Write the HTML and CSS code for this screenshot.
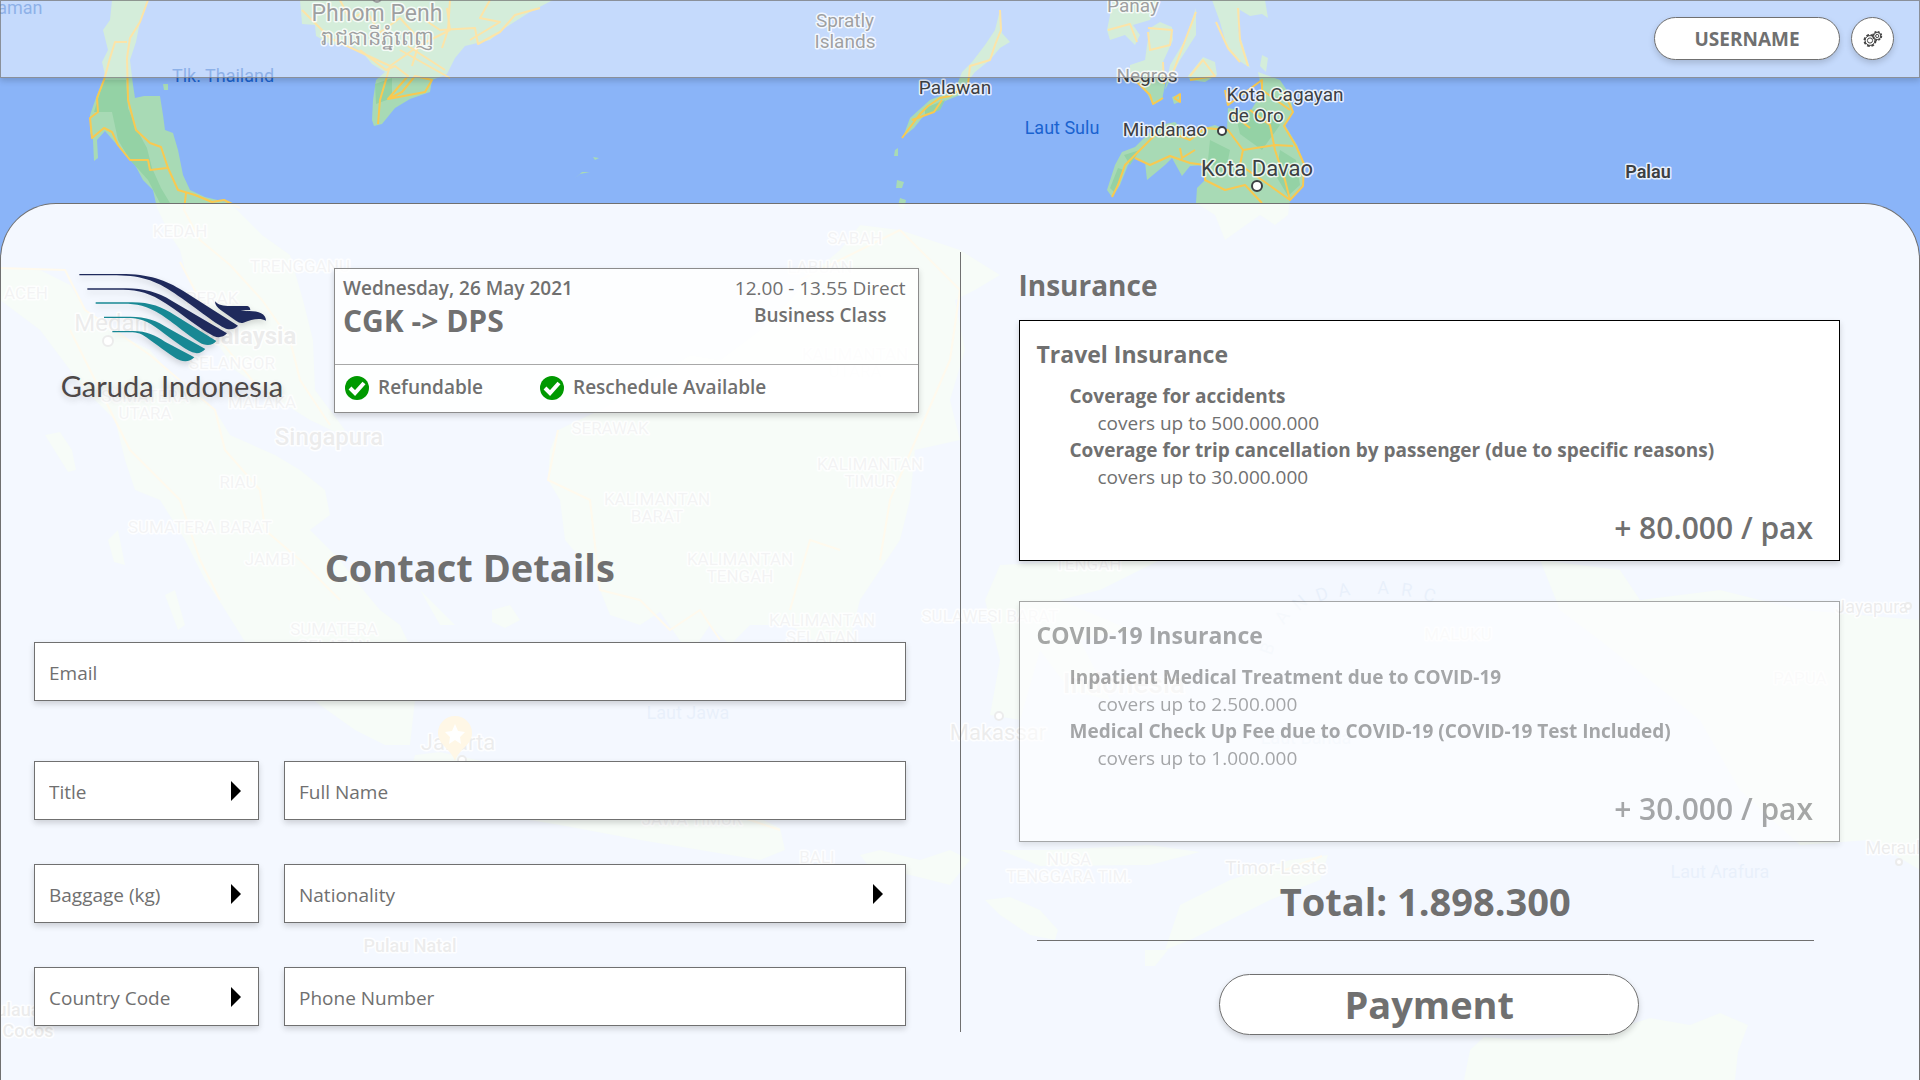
FILE: index.html
```html
<!DOCTYPE html>
<html lang="en">
<head>
<meta charset="utf-8">
<meta name="viewport" content="width=device-width, initial-scale=1">
<title>Flight booking – contact details</title>
<link rel="stylesheet" href="styles.css">
</head>
<body>
<svg class="map" viewBox="0 0 1920 1080" preserveAspectRatio="xMidYMin slice" aria-hidden="true">
  <g class="land">
    <path d="M112 0H147L140 22 136 42 130 60 133 85 135 98 144 96 160 96 163 115 165 130 173 133 178 150 183 175 190 190 205 197 230 203 262 235 290 255 303 300 313 340 315 390 345 430 335 432 310 420 270 395 235 370 215 340 200 300 185 270 180 250 170 235 157 208 153 190 143 180 135 165 125 155 118 146 105 131 97 140 98 158 94 161 93 140 90 132 90 115 97 95 105 75 102 62 108 50 103 30 110 20Z"/>
    <path d="M300 0 302 24 315 25 316 36 330 44 352 46 362 52 372 64 385 72 376 80 373 100 372 120 374 126 382 124 395 108 410 99 430 92 432 80 447 74 455 58 465 46 490 40 505 28 530 12 553 0Z"/>
    <path d="M1000 10 1002 33 1010 42 1000 48 990 60 975 72 965 85 960 95 940 103 922 118 914 128 903 137 910 118 930 100 955 90 962 72 972 62 985 45 995 30Z"/>
    <path d="M1113 0 1107 30 1110 40 1125 35 1135 45 1140 35 1133 25 1150 20 1158 0Z"/>
    <path d="M1150 28 1160 22 1172 27 1173 40 1163 62 1165 85 1162 100 1153 105 1147 93 1130 75 1130 65 1145 60 1147 45Z"/>
    <path d="M1196 8 1196 35 1180 60 1165 90 1170 65 1185 40Z"/>
    <path d="M1188 76 1203 57 1215 62 1217 75 1205 82 1190 80Z"/>
    <path d="M1212 0 1220 22 1228 50 1238 60 1250 68 1243 45 1238 30 1240 10 1250 16 1262 14 1268 18 1265 0Z"/>
    <path d="M1112 197 1107 190 1115 165 1122 152 1135 147 1145 137 1156 126 1175 122 1188 135 1205 128 1215 125 1227 130 1228 108 1250 112 1262 92 1258 72 1280 80 1290 95 1293 110 1285 125 1297 145 1305 165 1302 185 1290 200 1288 215 1275 225 1260 215 1225 240 1215 215 1196 203 1197 188 1205 180 1205 165 1190 166 1182 176 1172 158 1165 165 1147 180 1145 162 1135 158 1128 165 1120 185Z"/>
    <path d="M897 180 904 182 902 188 896 188ZM900 198 906 200 904 210 898 206ZM895 150 898 148 898 156 894 156ZM593 157 599 158 595 160ZM574 179 582 172 590 172 580 174ZM163 84 168 84 168 90 164 90ZM1262 55 1268 58 1266 72 1260 66ZM1172 97 1180 94 1180 102 1174 104Z"/>
    <path d="M0 268 40 270 70 285 85 310 110 330 150 350 180 385 215 410 230 435 275 455 300 470 325 490 330 515 310 530 340 560 355 580 380 610 400 625 412 650 415 700 410 745 385 745 355 730 320 705 250 650 222 605 205 580 185 540 160 500 135 490 125 460 115 420 85 390 40 330 0 300Z"/>
    <path d="M45 435 60 432 72 450 76 470 68 472ZM108 540 118 530 125 565 114 562ZM165 595 175 590 185 625 178 630ZM492 610 510 605 520 620 505 628 492 622ZM420 590 440 610 455 625 440 625Z"/>
    <path d="M558 430 550 450 548 480 560 500 565 540 590 570 600 590 610 615 640 625 660 612 690 655 710 625 730 645 750 625 790 625 820 645 850 640 860 600 880 570 900 540 910 500 915 450 960 440 950 400 965 350 955 300 975 290 1000 275 960 250 900 230 860 225 840 250 810 275 790 300 760 330 720 360 690 355 650 380 600 410Z"/>
    <path d="M415 755 440 752 500 765 540 780 600 790 660 795 720 800 780 828 785 850 760 860 700 850 640 840 560 825 500 815 440 810 405 790Z"/>
    <path d="M860 855 880 850 920 860 950 850 970 860 950 885 910 875 870 868ZM985 900 1010 897 1040 910 1058 930 1055 940 1030 935 1000 915ZM1000 850 1050 850 1150 845 1200 852 1150 865 1040 866Z"/>
    <path d="M985 600 1000 565 1100 560 1180 550 1100 590 1060 600 1130 630 1080 640 1110 700 1070 690 1040 650 1020 720 990 715 1000 660Z"/>
    <path d="M1540 560 1620 570 1640 600 1720 590 1800 610 1920 620V870L1870 840 1800 845 1740 790 1700 720 1650 680 1600 640 1560 610Z"/>
    <path d="M1180 905 1230 880 1290 860 1328 855 1320 880 1270 900 1230 920 1190 940 1165 950ZM1145 950 1168 950 1155 966 1145 966Z"/>
    <path d="M1464 1080 1470 1050 1484 1037 1525 1040 1600 1034 1650 1018 1690 1025 1720 1013 1748 1025 1738 1052 1735 1080Z"/>
  </g>
  <g class="forest">
    <path d="M104 80 126 80 128 108 136 128 147 148 152 168 161 188 170 203H160L148 180 130 160 118 140 112 112 94 112ZM375 84 392 78 392 98 376 104ZM1235 112 1265 108 1280 125 1262 150 1240 134ZM1210 140 1230 150 1225 175 1208 160ZM1124 155 1140 150 1130 165ZM925 108 945 100 940 110 925 116ZM1280 150 1296 160 1300 185 1288 196 1276 176ZM1118 168 1124 170 1114 192 1110 188Z"/>
  </g>
  <g class="roads">
    <path d="M148 0 140 22 130 38 127 58 128 100 136 130 150 143 161 147 168 168 178 190 195 195 212 202 224 200 240 208M127 42H115L110 58 104 80 97 98 98 112 90 118 92 138 104 128 112 132 118 145 130 160 148 160 150 170 167 168M186 193 184 210 200 240 230 265 262 300 290 340 300 380 330 425M180 262 200 300 220 340 260 390"/>
    <path d="M390 66 380 100 378 124M388 99 425 92 432 80 415 76 402 92 388 99 408 76 395 66 386 70 360 50M302 10 330 38 390 66 420 45 450 30 447 8M400 50 450 78M408 46 445 70M425 20 440 30 475 28 478 44 500 32 515 15 540 8M450 0 448 30 442 48M490 0 480 18 500 22 470 40M378 34 400 18 420 40 412 66M340 0 350 20 366 10 378 30"/>
    <path d="M1000 10 1001 30 995 45 990 60 970 66 968 85 950 96 940 98 928 106 920 114 902 138M912 120 934 112 942 100"/>
    <path d="M1108 30 1130 24 1137 42M1148 28 1172 30 1170 45 1150 50 1148 32M1163 62 1164 84M1130 75 1150 95 1153 104 1163 98M1170 80 1196 12M1190 76 1203 60 1215 76 1190 80M1216 22 1228 48 1240 62M1238 8 1240 40 1248 66M1225 90 1228 105 1262 80 1262 98M1174 98 1180 94 1180 102 1174 98"/>
    <path d="M1112 197 1118 185 1125 165 1140 150 1155 135 1175 134 1190 140 1205 128 1228 130 1243 150 1240 165 1262 180 1290 200M1135 158 1150 165 1170 156 1190 163 1205 165 1205 180 1225 190 1245 185 1262 203M1243 150 1275 145 1293 146M1250 110 1270 125 1275 150 1285 180 1290 200 1303 186 1304 164 1296 146 1284 126 1293 112 1284 92M1230 112 1250 128M1180 148 1182 158 1195 150M1262 90 1290 110"/>
    <path d="M0 268 65 270 85 310 150 355 215 410 225 450 260 490 265 530 300 560 340 600M70 330 115 420 130 450 180 500 200 560 220 600M558 430 548 480 590 500 600 590 640 600 670 630 700 610 720 640M900 230 960 290 950 360 890 500 880 560M790 610 810 540 840 550M415 765 500 785 600 800 720 810 780 830M900 230 800 280"/>
    <path d="M1285 870 1322 856"/>
  </g>
  <g class="labels">
    <text x="377" y="21" font-size="23">Phnom Penh</text>
    <text x="377" y="45" font-size="21">រាជធានីភ្នំពេញ</text>
    <text x="845" y="27" font-size="19">Spratly</text>
    <text x="845" y="48" font-size="19">Islands</text>
    <text x="955" y="94" font-size="19">Palawan</text>
    <text x="1133" y="12" font-size="19">Panay</text>
    <text x="1147" y="82" font-size="19">Negros</text>
    <text x="1165" y="136" font-size="19">Mindanao</text>
    <text x="1285" y="101" font-size="19">Kota Cagayan</text>
    <text x="1256" y="122" font-size="19">de Oro</text>
    <text x="1257" y="176" font-size="22">Kota Davao</text>
    <text x="1648" y="178" font-size="18" font-weight="600">Palau</text>
    <text x="111" y="331" font-size="24">Medan</text>
    <text x="248" y="344" font-size="24" font-weight="700">Malaysia</text>
    <text x="329" y="445" font-size="24" font-weight="500">Singapura</text>
    <text x="458" y="750" font-size="22">Jakarta</text>
    <text x="1124" y="693" font-size="28" font-weight="500">Indonesia</text>
    <text x="998" y="740" font-size="22">Makassar</text>
    <text x="410" y="952" font-size="18" font-weight="500">Pulau Natal</text>
    <text x="8" y="1016" font-size="18" font-weight="500">Kepulauan</text>
    <text x="28" y="1037" font-size="18" font-weight="500">Cocos</text>
    <text x="1276" y="874" font-size="19">Timor-Leste</text>
    <text x="1872" y="613" font-size="18">Jayapura</text>
    <text x="1900" y="854" font-size="18">Merauke</text>
  </g>
  <g class="labels region">
    <text x="180" y="237">KEDAH</text><text x="300" y="272">TRENGGANU</text><text x="26" y="299">ACEH</text>
    <text x="212" y="304">PERAK</text><text x="232" y="369">SELANGOR</text><text x="145" y="402">SUMATERA</text>
    <text x="145" y="419">UTARA</text><text x="262" y="408">MALAKA</text><text x="238" y="488">RIAU</text>
    <text x="200" y="533">SUMATERA BARAT</text><text x="270" y="565">JAMBI</text><text x="334" y="635">SUMATERA</text>
    <text x="334" y="652">SELATAN</text><text x="820" y="273">LABUAN</text><text x="855" y="244">SABAH</text>
    <text x="610" y="434">SERAWAK</text><text x="870" y="470">KALIMANTAN</text><text x="870" y="487">TIMUR</text>
    <text x="855" y="360">KALIMANTAN</text><text x="855" y="377">UTARA</text><text x="657" y="505">KALIMANTAN</text>
    <text x="657" y="522">BARAT</text><text x="740" y="565">KALIMANTAN</text><text x="740" y="582">TENGAH</text>
    <text x="822" y="626">KALIMANTAN</text><text x="822" y="643">SELATAN</text><text x="990" y="622">SULAWESI BARAT</text>
    <text x="1088" y="570">TENGAH</text><text x="692" y="825">JAWA TIMUR</text><text x="817" y="863">BALI</text>
    <text x="1458" y="640">MALUKU</text><text x="1800" y="684">PAPUA</text><text x="1069" y="865">NUSA</text>
    <text x="1069" y="882">TENGGARA TIM.</text>
  </g>
  <g class="labels sea">
    <text x="4" y="14">Andaman</text><text x="223" y="82">Tlk. Thailand</text><text x="1062" y="134">Laut Sulu</text>
    <text x="688" y="719">Laut Jawa</text><text x="1306" y="744">Laut Banda</text><text x="1720" y="878">Laut Arafura</text>
    <text x="1270" y="646" transform="rotate(-70 1275 646)">B</text><text x="1288" y="622" transform="rotate(-55 1286 622)">A</text>
    <text x="1304" y="608" transform="rotate(-40 1303 608)">N</text><text x="1324" y="600" transform="rotate(-20 1324 600)">D</text>
    <text x="1345" y="596" transform="rotate(-10 1345 596)">A</text><text x="1383" y="594">A</text>
    <text x="1406" y="596" transform="rotate(8 1406 596)">R</text><text x="1428" y="601" transform="rotate(16 1428 601)">C</text>
  </g>
  <g class="town"><circle cx="1222" cy="131" r="4"/><circle cx="1257" cy="186" r="5"/><circle cx="108" cy="341" r="5"/><circle cx="999" cy="716" r="4"/><circle cx="1908" cy="606" r="3"/><circle cx="1899" cy="862" r="3"/><circle cx="462" cy="760" r="4"/><circle cx="377" cy="-2" r="4"/></g>
  <path fill="#f9ab00" d="M455 716a17 17 0 0 1 17 17c0 12-13 16-17 28-4-12-17-16-17-28a17 17 0 0 1 17-17Z"/>
  <path fill="#fff" d="m455 724 3 7 7 1-5 5 1 7-6-4-6 4 1-7-5-5 7-1Z"/>
</svg>

<div class="page">
  <header class="topbar">
    <button class="pill user" type="button">USERNAME</button>
    <button class="pill gear" type="button" aria-label="Settings">
      <svg width="20" height="18" viewBox="0 0 20 18" fill="none" stroke="#444">
        <circle cx="7" cy="10.500" r="5.600" stroke-width="1.800" stroke-dasharray="2.700 1.700"/>
        <circle cx="7" cy="10.500" r="4.900"/>
        <circle cx="7" cy="10.500" r="2.600"/>
        <circle cx="14.200" cy="6" r="4.200" stroke-width="1.600" stroke-dasharray="2 1.300" fill="#fff"/>
        <circle cx="14.200" cy="6" r="3.600"/>
        <circle cx="14.200" cy="6" r="1.600"/>
      </svg>
    </button>
  </header>

  <main class="panel">
    <section class="left">
      <div class="trip">
        <div class="logo">
          <svg viewBox="0 0 750 315" role="img" aria-label="Garuda Indonesia emblem">
            <g fill="#1f2a5c">
              <path d="M88 42H200C290 40 345 58 400 93L564 197Q550 212 528 206C500 195 440 145 385 108 325 65 280 47 200 46H88Z"/>
              <path d="M112 85H220C280 84 320 95 365 122L531 220Q515 237 492 229C455 210 400 165 350 132 300 98 265 90 220 89H112Z"/>
              <path d="M495 124C505 136 520 138 540 138H592Q600 140 601 150L572 151 602 155 588 153C620 151 648 158 648 182 630 172 605 178 580 188Q570 191 558 182L512 150Q495 138 495 124Z"/>
            </g>
            <g fill="#188894">
              <path d="M137 127H240C300 126 335 140 375 166L499 243Q485 260 460 253C430 240 380 195 335 165 290 136 260 131 220 131H137Z"/>
              <path d="M162 170H240C290 170 320 182 355 205L466 267Q450 285 427 277C400 265 350 225 315 200 280 177 260 174 230 174H162Z"/>
              <path d="M187 213H250C290 214 315 225 345 245L433 292Q415 310 390 301C365 290 330 260 300 240 275 220 262 217 240 217H187Z"/>
            </g>
          </svg>
          <span class="wordmark">Garuda Indonesıa</span>
        </div>
        <article class="flight">
          <div class="flight-main">
            <div>
              <p class="semi">Wednesday, 26 May 2021</p>
              <h2>CGK -&gt; DPS</h2>
            </div>
            <div class="times">
              <p>12.00 - 13.55 Direct</p>
              <p class="semi">Business Class</p>
            </div>
          </div>
          <ul class="perks">
            <li><svg width="24" height="24" viewBox="0 0 24 24"><circle cx="12" cy="12" r="12" fill="#090"/><path d="m5 12 5 5 9-10" fill="none" stroke="#fff" stroke-width="4"/></svg>Refundable</li>
            <li><svg width="24" height="24" viewBox="0 0 24 24"><circle cx="12" cy="12" r="12" fill="#090"/><path d="m5 12 5 5 9-10" fill="none" stroke="#fff" stroke-width="4"/></svg>Reschedule Available</li>
          </ul>
        </article>
      </div>

      <form class="contact">
        <h1>Contact Details</h1>
        <input class="field wide" type="email" placeholder="Email" aria-label="Email">
        <div class="choice"><select class="field" aria-label="Title"><option>Title</option></select><svg width="10" height="20" viewBox="0 0 10 20"><path d="M0 0 10 10 0 20Z"/></svg></div>
        <input class="field" type="text" placeholder="Full Name" aria-label="Full Name">
        <div class="choice"><select class="field" aria-label="Baggage (kg)"><option>Baggage (kg)</option></select><svg width="10" height="20" viewBox="0 0 10 20"><path d="M0 0 10 10 0 20Z"/></svg></div>
        <div class="choice long"><select class="field" aria-label="Nationality"><option>Nationality</option></select><svg width="10" height="20" viewBox="0 0 10 20"><path d="M0 0 10 10 0 20Z"/></svg></div>
        <div class="choice"><select class="field" aria-label="Country Code"><option>Country Code</option></select><svg width="10" height="20" viewBox="0 0 10 20"><path d="M0 0 10 10 0 20Z"/></svg></div>
        <input class="field" type="tel" placeholder="Phone Number" aria-label="Phone Number">
      </form>
    </section>

    <div class="divider"></div>

    <section class="right">
      <h2 class="heading">Insurance</h2>
      <article class="cover chosen">
        <h3>Travel Insurance</h3>
        <dl>
          <dt>Coverage for accidents</dt><dd>covers up to 500.000.000</dd>
          <dt>Coverage for trip cancellation by passenger (due to specific reasons)</dt><dd>covers up to 30.000.000</dd>
        </dl>
        <p class="price">+ 80.000 / pax</p>
      </article>
      <article class="cover">
        <h3>COVID-19 Insurance</h3>
        <dl>
          <dt>Inpatient Medical Treatment due to COVID-19</dt><dd>covers up to 2.500.000</dd>
          <dt>Medical Check Up Fee due to COVID-19 (COVID-19 Test Included)</dt><dd>covers up to 1.000.000</dd>
        </dl>
        <p class="price">+ 30.000 / pax</p>
      </article>
      <p class="total">Total: 1.898.300</p>
      <button class="pill pay" type="button">Payment</button>
    </section>
  </main>
</div>
</body>
</html>
```
FILE: styles.css
```css
* { box-sizing: border-box; }
body, h1, h2, h3, p, ul, dl, dd { margin: 0; padding: 0; }
body {
  background: #8ab4f8;
  color: #707070;
  font: 400 19px/27px "Open Sans", "Noto Sans", sans-serif;
}
button, input, select { font: inherit; color: inherit; }

/* Background map */
.map { position: absolute; inset: 0; width: 100%; height: 100%; z-index: -1; }
.land { fill: #a8dab5; }
.forest { fill: #94d2a5; }
.roads { fill: none; stroke: #f8c951; stroke-width: 2; stroke-linejoin: round; }
.labels {
  font-family: Roboto, sans-serif;
  text-anchor: middle;
  fill: #3c4043;
  stroke: #fff;
  stroke-opacity: .8;
  stroke-width: 3;
  stroke-linejoin: round;
  paint-order: stroke;
}
.region { font-size: 17px; fill: #80868b; }
.sea { font-size: 18px; fill: #1a63d0; stroke: none; }
.town { fill: #fff; stroke: #3c4043; stroke-width: 2; }

.page { min-height: 100vh; display: flex; flex-direction: column; }

.topbar {
  height: 78px;
  display: flex;
  justify-content: flex-end;
  gap: 11px;
  padding: 16px 25px 0;
  background: rgba(255, 255, 255, .5);
  border: 1px solid rgba(112, 112, 112, .7);
  box-shadow: 0 3px 6px rgba(0, 0, 0, .16);
}
.pill {
  display: flex;
  align-items: center;
  justify-content: center;
  padding: 0;
  background: #fff;
  border: 1px solid #707070;
  border-radius: 31px;
  box-shadow: 0 3px 6px rgba(0, 0, 0, .16);
  font-weight: 700;
}
.user { width: 186px; height: 43px; padding-top: 2px; }
.gear { width: 43px; height: 43px; }

.panel {
  flex: 1;
  display: grid;
  grid-template-columns: 1fr 1px 1fr;
  margin-top: 125px;
  background: rgba(255, 255, 255, .9);
  border: 1px solid #707070;
  border-bottom: 0;
  border-radius: 56px 56px 0 0;
}
.divider { margin: 48px 0; background: #707070; }

.left { padding: 64px 41px 48px 33px; }
.trip { display: flex; gap: 51px; padding-left: 27px; }
.logo { width: 222px; display: flex; flex-direction: column; align-items: center; }
.logo svg { width: 250px; margin: -8px -17px 0 -11px; filter: drop-shadow(0 3px 3px rgba(0, 0, 0, .16)); }
.wordmark {
  margin-top: 3px;
  color: #4d4848;
  font: 400 29px/36px Lato, sans-serif;
  text-shadow: 0 3px 6px rgba(0, 0, 0, .16);
  white-space: nowrap;
}
.flight {
  flex: 1;
  background: rgba(255, 255, 255, .8);
  border: 1px solid #8c8c8c;
  box-shadow: 0 3px 6px rgba(0, 0, 0, .16);
}
.flight-main {
  display: flex;
  justify-content: space-between;
  min-height: 95px;
  padding: 6px 12px 0 8px;
}
.semi { font-weight: 600; }
.flight h2 { font-size: 30px; line-height: 38px; }
.times { text-align: center; }
.perks {
  display: flex;
  gap: 57px;
  padding: 9px 10px 11px;
  list-style: none;
  font-weight: 600;
  background: rgba(255, 255, 255, .6);
  border-top: 1px solid #a8a8a8;
}
.perks li { display: flex; align-items: center; gap: 9px; }

.contact {
  display: grid;
  grid-template-columns: 225px 1fr;
  gap: 44px 25px;
  margin: 127px 13px 0 0;
}
.contact h1 {
  grid-column: 1 / -1;
  font-size: 38px;
  line-height: 54px;
  text-align: center;
  margin-bottom: 4px;
}
.wide { grid-column: 1 / -1; margin-bottom: 16px; }
.field {
  width: 100%;
  height: 59px;
  padding: 3px 14px 0;
  background: #fff;
  border: 1px solid #707070;
  border-radius: 0;
  box-shadow: 0 3px 6px rgba(0, 0, 0, .16);
  appearance: none;
}
.field::placeholder { color: #707070; opacity: 1; }
.choice { display: grid; align-items: center; }
.choice > * { grid-area: 1 / 1; }
.choice svg { justify-self: end; margin-right: 18px; pointer-events: none; }
.choice.long svg { margin-right: 23px; }

.right {
  display: flex;
  flex-direction: column;
  padding: 62px 79px 43px 58px;
}
.heading { font-size: 28px; line-height: 38px; margin-bottom: 16px; }
.cover {
  height: 241px;
  margin-bottom: 40px;
  padding: 15px 26px 0 17px;
  background: #fff;
  border: 1px solid #707070;
  box-shadow: 0 3px 6px rgba(0, 0, 0, .16);
  opacity: .6;
}
.chosen { border-color: #000; opacity: 1; }
.cover h3 { font-size: 23px; line-height: 36px; margin-bottom: 11px; }
.cover dl { padding-left: 33px; }
.cover dt { font-weight: 700; }
.cover dd { padding-left: 28px; }
.price { margin-top: 18px; font-size: 30px; line-height: 38px; font-weight: 600; text-align: right; }
.total {
  margin: -6px 26px 33px 18px;
  padding-bottom: 14px;
  border-bottom: 1px solid #707070;
  font-size: 38px;
  line-height: 50px;
  font-weight: 700;
  text-align: center;
}
.pay { width: 420px; height: 61px; margin: 0 auto; font-size: 38px; }
```
